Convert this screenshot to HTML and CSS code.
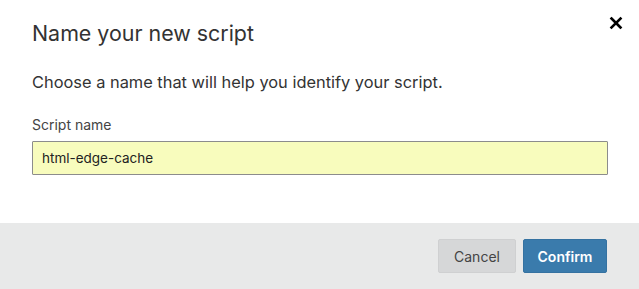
FILE: index.html
```html
<!DOCTYPE html>
<html lang="en">
<head>
    <meta charset="UTF-8">
    <title>Name your new script</title>
    <link rel="stylesheet" href="styles.css">
</head>
<body>
    <div class="modal">
        <div class="modal-body">
            <h2>Name your new script</h2>
            <button class="close" aria-label="Close">
                <svg viewBox="0 0 14 14" width="14" height="14">
                    <path d="M2.5 2.5L11.5 11.5M11.5 2.5L2.5 11.5" stroke="#000" stroke-width="2.6" stroke-linecap="square"/>
                </svg>
            </button>
            <p class="intro">Choose a name that will help you identify your script.</p>
            <div class="field">
                <label for="scriptName">Script name</label>
                <input type="text" id="scriptName" value="html-edge-cache">
            </div>
        </div>
        <div class="modal-footer">
            <button class="btn btn-cancel">Cancel</button>
            <button class="btn btn-confirm">Confirm</button>
        </div>
    </div>
</body>
</html>
```

FILE: styles.css
```css
* {
    margin: 0;
    padding: 0;
    box-sizing: border-box;
    font-family: Inter, "Liberation Sans", Arial, sans-serif;
}
body {
    background: #fff;
    width: 639px;
    height: 289px;
    overflow: hidden;
}
.modal {
    display: flex;
    flex-direction: column;
    height: 289px;
}
.modal-body {
    position: relative;
    padding: 20px 32px 0 32px;
    height: 223px;
}
h2 {
    font-size: 21.4px;
    font-weight: 400;
    color: #333;
    line-height: 26px;
}
.close {
    position: absolute;
    top: 16px;
    right: 16px;
    width: 14px;
    height: 14px;
    background: none;
    border: none;
    cursor: pointer;
}
.close svg {
    display: block;
}
.intro {
    margin-top: 26px;
    font-size: 16.4px;
    line-height: 20px;
    color: #333;
}
.field {
    margin-top: 25px;
    display: flex;
    flex-direction: column;
}
.field label {
    font-size: 14px;
    line-height: 16px;
    color: #444;
    margin-bottom: 8px;
}
.field input {
    width: 576px;
    height: 34px;
    padding: 0 9px;
    font-size: 13.5px;
    color: #222;
    background: #f8fcbd;
    border: 1px solid #8c8c8c;
    border-radius: 1px;
    outline: none;
}
.modal-footer {
    flex: 1;
    display: flex;
    justify-content: flex-end;
    align-items: flex-start;
    gap: 7px;
    padding: 16px 32px 0 0;
    background: #e8e9e9;
}
.btn {
    height: 34px;
    font-size: 14px;
    border-radius: 2px;
    cursor: pointer;
}
.btn-cancel {
    width: 78px;
    background: #d6d7d8;
    color: #444;
    border: 1px solid #cfd0d1;
}
.btn-confirm {
    width: 84px;
    background: #3a7bac;
    color: #fff;
    font-weight: 600;
    border: 1px solid #3572a1;
}
```
